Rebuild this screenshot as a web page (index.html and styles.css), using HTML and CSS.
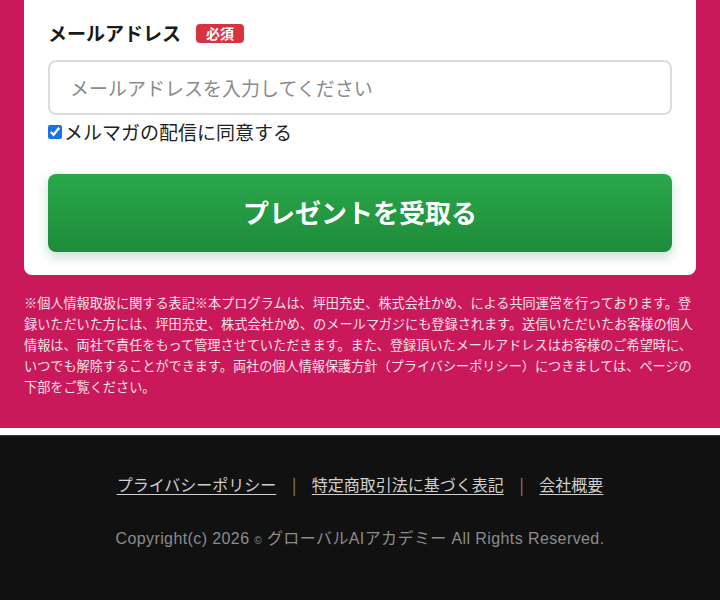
FILE: index.html
```html
<!DOCTYPE html>
<html lang="ja">
<head>
<meta charset="utf-8">
<link rel="stylesheet" href="styles.css">
</head>
<body>
<main class="page">
  <section class="card">
    <div class="label-row">
      <span class="label">メールアドレス</span>
      <span class="badge">必須</span>
    </div>
    <input class="email" type="email" placeholder="メールアドレスを入力してください">
    <label class="agree"><input class="check" type="checkbox" checked>メルマガの配信に同意する</label>
    <button class="submit" type="button">プレゼントを受取る</button>
  </section>
  <p class="notice">※個人情報取扱に関する表記※本プログラムは、坪田充史、株式会社かめ、による共同運営を行っております。登録いただいた方には、坪田充史、株式会社かめ、のメールマガジにも登録されます。送信いただいたお客様の個人情報は、両社で責任をもって管理させていただきます。また、登録頂いたメールアドレスはお客様のご希望時に、いつでも解除することができます。両社の個人情報保護方針（プライバシーポリシー）につきましては、ページの下部をご覧ください。</p>
</main>
<footer class="footer">
  <nav class="links">
    <a href="#">プライバシーポリシー</a>
    <span class="sep">|</span>
    <a href="#">特定商取引法に基づく表記</a>
    <span class="sep">|</span>
    <a href="#">会社概要</a>
  </nav>
  <p class="copy">Copyright(c) 2026 <span class="c">©</span> グローバルAIアカデミー All Rights Reserved.</p>
</footer>
</body>
</html>
```
FILE: styles.css
```css
* { box-sizing: border-box; }
html, body {
  margin: 0;
  padding: 0;
}
body {
  font-family: "Noto Sans CJK JP", "Noto Sans", sans-serif;
  background: #111111;
}
.page {
  background: #c9195b;
  padding: 0 24px 31px;
  border-bottom: 7px solid #ffffff;
}
.card {
  background: #ffffff;
  border-radius: 0 0 8px 8px;
  padding: 19px 24px 23px;
  display: flex;
  flex-direction: column;
}
.label-row {
  display: flex;
  align-items: center;
  height: 28px;
}
.label {
  font-size: 19px;
  font-weight: 700;
  color: #1a1a1a;
  line-height: 28px;
}
.badge {
  margin-left: 15px;
  background: #d8343f;
  color: #ffffff;
  font-size: 14px;
  font-weight: 700;
  line-height: 19px;
  height: 19px;
  padding: 0 10px;
  border-radius: 4px;
}
.email {
  margin-top: 13px;
  height: 55px;
  width: 100%;
  border: 2px solid #dcdcdc;
  border-radius: 8px;
  padding: 0 20px;
  font-family: inherit;
  font-size: 19px;
  color: #222;
  outline: none;
}
.email::placeholder { color: #8a8a8a; }
.agree {
  margin-top: 3px;
  display: flex;
  align-items: center;
  font-size: 19px;
  line-height: 28px;
  color: #222;
}
.check {
  margin: 0 2px 0 0;
  width: 14px;
  height: 14px;
  accent-color: #1a73e8;
}
.submit {
  margin-top: 28px;
  height: 78px;
  width: 100%;
  border: none;
  border-radius: 8px;
  background: linear-gradient(#2aa84b, #1e8b3a);
  box-shadow: 0 5px 12px rgba(30, 130, 60, 0.25);
  color: #ffffff;
  font-family: inherit;
  font-size: 26px;
  font-weight: 700;
  padding: 0 0 4px;
}
.notice {
  margin: 0;
  padding-top: 17px;
  font-size: 13.15px;
  line-height: 21px;
  color: #f8e0e9;
}
.footer {
  border-top: 1px solid #3a3a3a;
  padding: 36px 0 60px;
  text-align: center;
}
.links {
  font-size: 16px;
  line-height: 24px;
  color: #cfcfcf;
}
.links a {
  color: #cfcfcf;
  text-decoration: underline;
  text-underline-offset: 3px;
}
.sep {
  color: #8a8a8a;
  margin: 0 12px;
}
.copy {
  margin: 31px 0 0;
  font-family: "Liberation Sans", "Noto Sans CJK JP", sans-serif;
  font-size: 16px;
  letter-spacing: 0.4px;
  line-height: 24px;
  color: #8c8c8c;
}
.c { font-size: 10px; }
```
